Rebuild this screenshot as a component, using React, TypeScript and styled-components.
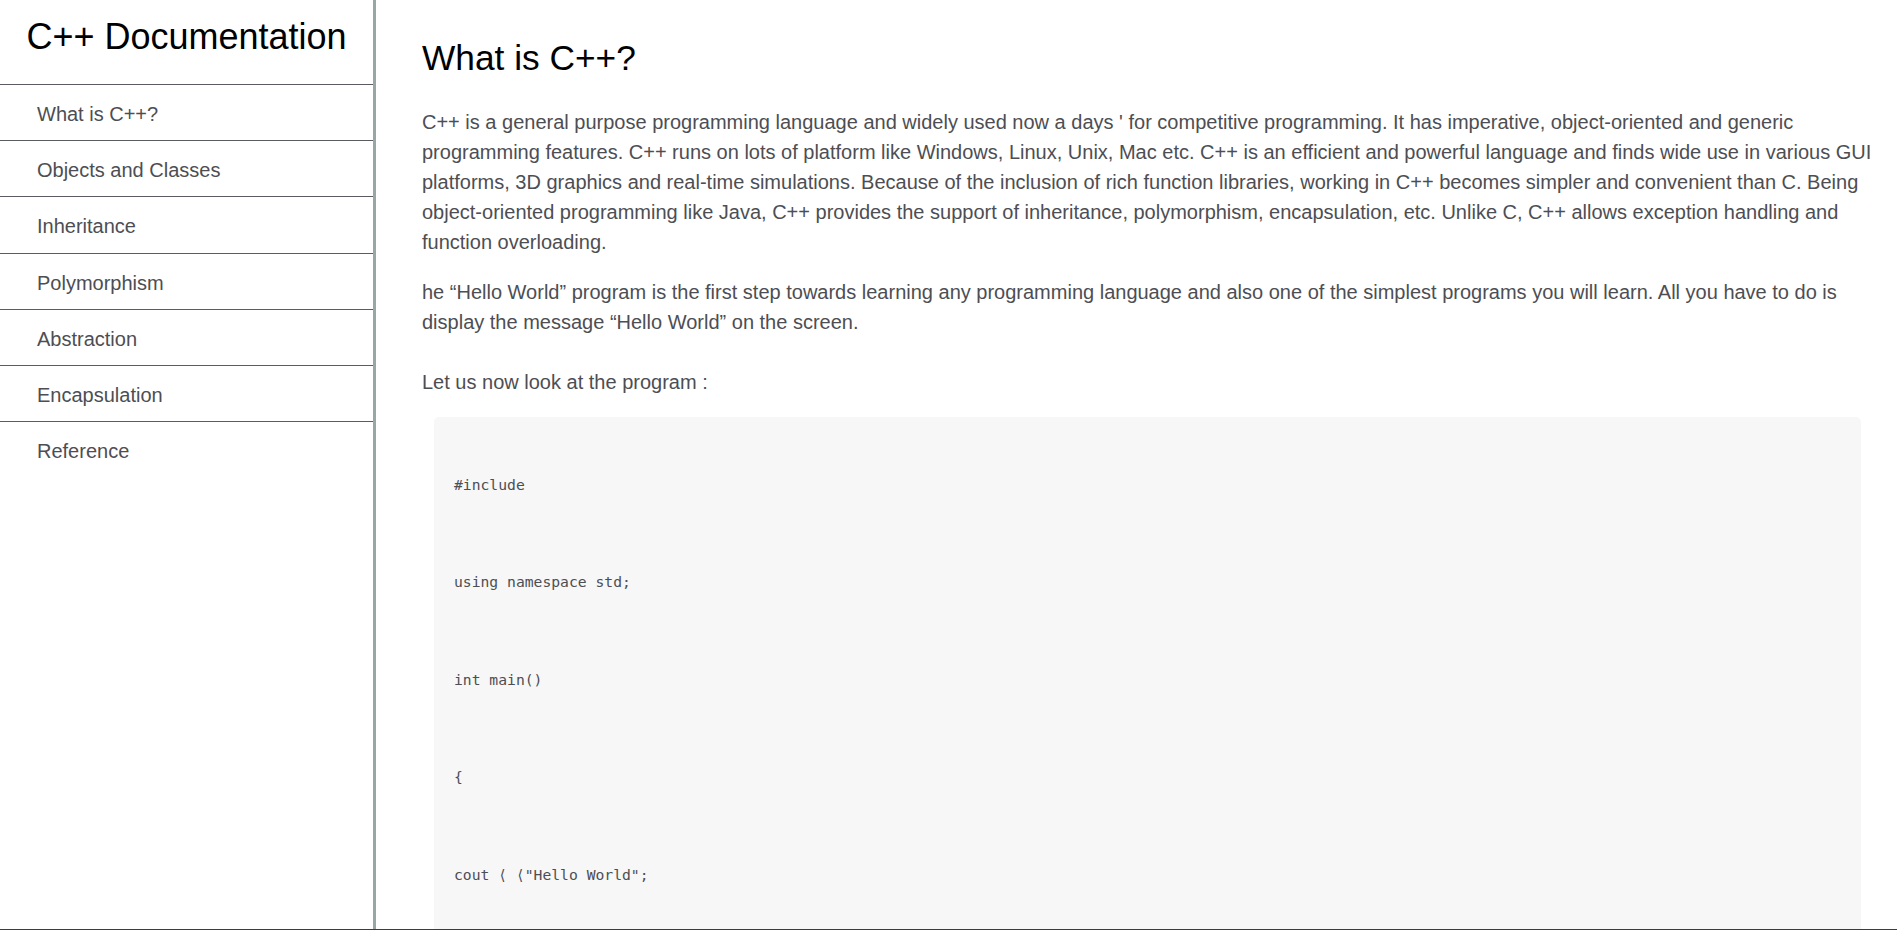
import React from 'react';
import styled, { createGlobalStyle } from 'styled-components';

const GlobalStyle = createGlobalStyle`
  html, body {
    margin: 0;
    padding: 0;
    overflow: hidden;
    background: #fff;
    font-family: "Liberation Sans", Arial, sans-serif;
  }
`;

const Page = styled.div`
  display: flex;
  box-sizing: border-box;
  height: 100vh;
  border-bottom: 1px solid #3b3b44;
  overflow: hidden;
`;

const Nav = styled.nav`
  flex: 0 0 373px;
  border-right: 3px solid #9aa5a8;
  display: flex;
  flex-direction: column;
`;

const NavTitle = styled.header`
  box-sizing: border-box;
  height: 85px;
  padding-top: 16px;
  border-bottom: 1px solid #5b5c61;
  font-size: 36px;
  line-height: 42px;
  color: #000;
  text-align: center;
`;

const NavList = styled.ul`
  list-style: none;
  margin: 0;
  padding: 0;
`;

const NavItem = styled.li`
  &:not(:last-child) {
    border-bottom: 1px solid #5b5c61;
  }
`;

const NavLink = styled.a`
  display: block;
  padding: 18px 0 14.2px 37px;
  font-size: 20px;
  line-height: 23px;
  color: #4d4e53;
  text-decoration: none;
`;

const Main = styled.main`
  flex: 1;
  min-width: 0;
  padding: 37px 16px 0 46px;
`;

const Section = styled.section``;

const Heading = styled.h1`
  margin: 0 0 29px;
  font-size: 35.3px;
  line-height: 41px;
  font-weight: 400;
  color: #000;
`;

const Paragraph = styled.p`
  margin: 0 0 20px;
  font-size: 20px;
  line-height: 30px;
  color: #4d4e53;
`;

const CodeBlock = styled.pre`
  margin: 0 20px 0 12px;
  padding: 19px 20px 18px;
  background: #f7f7f7;
  border-radius: 5px;
  font-family: "DejaVu Sans Mono", "Liberation Mono", monospace;
  font-size: 14.7px;
  line-height: 32.5px;
  color: #4d4e53;
  white-space: pre-wrap;
`;

const links = [
  'What is C++?',
  'Objects and Classes',
  'Inheritance',
  'Polymorphism',
  'Abstraction',
  'Encapsulation',
  'Reference',
];

const codeLines = [
  '#include',
  'using namespace std;',
  'int main()',
  '{',
  'cout \u27E8 \u27E8"Hello World";',
  'return 0;',
  '}',
];

export default function App(): JSX.Element {
  return (
    <>
      <GlobalStyle />
      <Page>
        <Nav id="navbar">
          <NavTitle>C++ Documentation</NavTitle>
          <NavList>
            {links.map((link) => (
              <NavItem key={link}>
                <NavLink href={`#${link.replace(/\W+/g, '_')}`}>{link}</NavLink>
              </NavItem>
            ))}
          </NavList>
        </Nav>
        <Main id="main-doc">
          <Section id="What_is_C_">
            <Heading>What is C++?</Heading>
            <Paragraph>
              C++ is a general purpose programming language and widely used now a days &apos; for
              competitive programming. It has imperative, object-oriented and generic programming
              features. C++ runs on lots of platform like Windows, Linux, Unix, Mac etc. C++ is an
              efficient and powerful language and finds wide use in various GUI platforms, 3D
              graphics and real-time simulations. Because of the inclusion of rich function
              libraries, working in C++ becomes simpler and convenient than C. Being
              object-oriented programming like Java, C++ provides the support of inheritance,
              polymorphism, encapsulation, etc. Unlike C, C++ allows exception handling and
              function overloading.
            </Paragraph>
            <Paragraph>
              he “Hello World” program is the first step towards learning any programming language
              and also one of the simplest programs you will learn. All you have to do is display
              the message “Hello World” on the screen.
              <br />
              <br />
              Let us now look at the program :
            </Paragraph>
            <CodeBlock>{`\n${codeLines.join('\n\n\n')}`}</CodeBlock>
          </Section>
        </Main>
      </Page>
    </>
  );
}
